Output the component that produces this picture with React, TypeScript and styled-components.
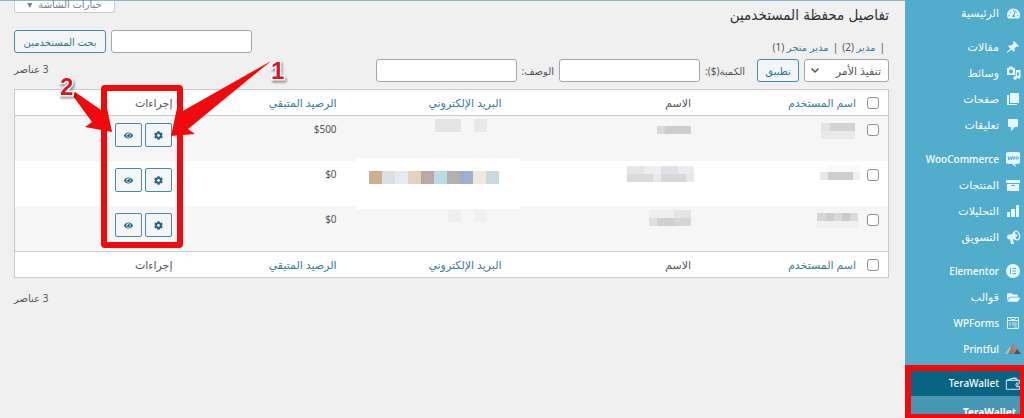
import React from "react";
import styled, { createGlobalStyle } from "styled-components";
import { FaTachometerAlt, FaFolderOpen, FaCog, FaEye } from "react-icons/fa";

const Global = createGlobalStyle`
  * { box-sizing: border-box; }
  body {
    margin: 0;
    background: #f0f0f0;
    color: #50575e;
    font-family: "Noto Sans", "DejaVu Sans", sans-serif;
    font-size: 11px;
    line-height: 16px;
  }
  button, input, select { font: inherit; color: inherit; }
  a { color: #3a7c98; text-decoration: none; }
`;

const Shell = styled.div`
  display: flex;
  height: 100vh;
  overflow: hidden;
`;

const Sidebar = styled.nav`
  flex: 0 0 119px;
  position: relative;
  background: #52accc;
`;

const MenuGroup = styled.ul`
  list-style: none;
  margin: 0 0 8px;
  padding: 0;
`;

const MenuLink = styled.a<{ $current?: boolean; $latin?: boolean }>`
  display: flex;
  align-items: center;
  gap: 6px;
  height: 26px;
  padding: 0 3px;
  color: #fff;
  background: ${(p) => (p.$current ? "#096484" : "transparent")};
  font-size: ${(p) => (p.$latin ? 10 : 11)}px;
  font-weight: ${(p) => (p.$latin ? 500 : 400)};
  white-space: nowrap;
`;

const MenuIcon = styled.span`
  flex: 0 0 16px;
  display: flex;
  justify-content: center;
  color: #e5f8ff;
`;

const SubmenuLink = styled.a`
  display: block;
  height: 40px;
  padding: 8px;
  background: #4796b3;
  color: #fff;
  font-size: 10px;
  font-weight: 700;
`;

const SidebarHighlight = styled.div`
  position: absolute;
  inset: auto 0 0;
  height: 53px;
  border: solid #f00a0e;
  border-width: 6px 4px 4px 6px;
`;

const Main = styled.main`
  flex: 1;
  min-width: 0;
  padding: 0 16px 0 14px;
  border-top: 1px solid #8fb4c2;
`;

const TopRow = styled.header`
  display: flex;
  justify-content: space-between;
  align-items: flex-start;
  height: 29px;
`;

const Title = styled.h1`
  margin: 0;
  padding-top: 2px;
  color: #2c3338;
  font-family: "DejaVu Sans Condensed", "DejaVu Sans", sans-serif;
  font-size: 15px;
  font-weight: 400;
  line-height: 24px;
`;

const ScreenOptions = styled.button`
  display: flex;
  align-items: flex-end;
  justify-content: center;
  gap: 6px;
  width: 101px;
  height: 12px;
  padding: 0;
  border: 1px solid #c9cbcd;
  border-top: 0;
  border-radius: 0 0 3px 3px;
  background: #fff;
  color: #787c82;
  font-size: 10px;
  line-height: 16px;
`;

const Tools = styled.div`
  display: grid;
  grid-template-columns: 1fr auto;
  row-gap: 6px;
  align-items: end;
  margin-bottom: 7px;
`;

const Filters = styled.div`
  display: flex;
  gap: 4px;
  padding: 0 4px;
  font-size: 10px;
  line-height: 12px;
`;

const Row = styled.div`
  display: flex;
  align-items: center;
  gap: 5px;
`;

const Fields = styled(Row)`
  margin-right: 7px;
`;

const Field = styled.input`
  width: 141px;
  height: 23px;
  border: 1px solid #a3a7ab;
  border-radius: 3px;
  background: #fff;
`;

const FieldLabel = styled.label`
  font-size: 10px;
`;

const SelectBox = styled.span`
  position: relative;
  display: flex;
`;

const Select = styled.select`
  appearance: none;
  width: 85px;
  height: 23px;
  padding: 0 7px;
  border: 1px solid #a3a7ab;
  border-radius: 3px;
  background: #fff;
`;

const Chevron = styled.svg`
  position: absolute;
  left: 6px;
  top: 8px;
  pointer-events: none;
`;

const Button = styled.button<{ $width: number }>`
  width: ${(p) => p.$width}px;
  height: 23px;
  padding: 0;
  border: 1px solid #4a8ba3;
  border-radius: 3px;
  background: #f3f5f6;
  color: #2f7691;
  font-size: 10px;
  white-space: nowrap;
`;

const Count = styled.p`
  margin: 0;
  font-size: 10px;
  line-height: 20px;
  text-align: left;
`;

const ToolsCount = styled(Count)`
  align-self: start;
`;

const TableWrap = styled.section`
  position: relative;
  margin-bottom: 10px;
`;

const Table = styled.table`
  width: 100%;
  table-layout: fixed;
  border-collapse: separate;
  border-spacing: 0;
  border: 1px solid #c8cacd;
  background: #fff;
`;

const HeadCell = styled.th<{ $foot?: boolean }>`
  height: 26px;
  padding: 0 8px;
  border: 0 solid #c8cacd;
  border-width: ${(p) => (p.$foot ? "1px 0 0" : "0 0 1px")};
  font-weight: 400;
  text-align: right;
`;

const BodyRow = styled.tr`
  &:nth-child(odd) { background: #f6f6f6; }
`;

const Cell = styled.td`
  height: 45px;
  padding: 5px 8px;
  font-size: 10px;
  vertical-align: top;
`;

const MosaicCell = styled.td`
  padding: 0;
  vertical-align: top;
`;

const Mosaic = styled.svg`
  display: block;
  overflow: visible;
`;

const CheckCell = styled(Cell)`
  padding: 8px 9px 0 0;
`;

const CheckHead = styled(HeadCell)`
  padding: 0 9px 0 0;
`;

const Checkbox = styled.input`
  appearance: none;
  display: block;
  width: 12px;
  height: 12px;
  margin: 0;
  border: 1px solid #8c8f94;
  border-radius: 3px;
  background: #fff;
`;

const Actions = styled.div`
  display: flex;
  gap: 3px;
  padding-top: 2px;
`;

const ActionButton = styled.button`
  display: grid;
  place-items: center;
  width: 27px;
  height: 24px;
  padding: 0;
  border: 1px solid #4a8ba3;
  border-radius: 2px;
  background: #f3f5f6;
  color: #23657e;
`;

const Annotations = styled.svg`
  position: absolute;
  left: 0;
  top: -40px;
  pointer-events: none;
`;

const Digits = styled.g`
  fill: #e3121a;
  stroke: #fff;
  stroke-width: 3px;
  paint-order: stroke;
  font-family: "Liberation Sans", sans-serif;
  font-size: 24px;
  font-weight: 700;
  filter: drop-shadow(1px 2px 1px rgba(0, 0, 0, 0.4));
`;

const icons = {
  dash: <FaTachometerAlt size={13} />,
  folder: <FaFolderOpen size={13} />,
  pin: (
    <svg width="14" height="14" viewBox="0 0 14 14" fill="currentColor">
      <path d="M8 1l5 5-1 1-1.500-.500L8.500 8.500Q9 10.500 8 12L5.500 9.500 1 13 .500 12.500 4.500 8.500 2 6Q3.500 5 5.500 5.500L7.500 3.500 7 2z" />
    </svg>
  ),
  media: (
    <svg width="15" height="14" viewBox="0 0 15 14" fill="currentColor">
      <path d="M1 2h1.500l1-1.500h3L7.500 2H9v7H1zM5 3.500a2 2 0 1 0 .010 0z" fillRule="evenodd" />
      <path d="M10 4h4.500v7a1.700 1.700 0 1 1-1.500-1.700V6.500h-2V12a1.800 1.800 0 1 1-1.500-1.800z" />
    </svg>
  ),
  elementor: (
    <svg width="14" height="14" viewBox="0 0 14 14">
      <circle cx="7" cy="7" r="7" fill="currentColor" />
      <path d="M4.500 4v6M6.500 4.500H10M6.500 7H10M6.500 9.500H10" stroke="#52accc" fill="none" />
    </svg>
  ),
  pages: (
    <svg width="14" height="14" viewBox="0 0 14 14" fill="currentColor">
      <path d="M4 1h9v10H4z" />
      <path d="M1 3h2v9h8v1H1z" />
    </svg>
  ),
  comment: (
    <svg width="14" height="14" viewBox="0 0 14 14" fill="currentColor">
      <path d="M3 1h8q1 0 1 1v6q0 1-1 1H9l-4 4V9H3Q2 9 2 8V2q0-1 1-1z" />
    </svg>
  ),
  woo: (
    <svg width="16" height="16" viewBox="0 0 16 16">
      <path d="M3 1h10q2 0 2 2v8q0 2-2 2h-3l1 3-4-3H3q-2 0-2-2V3q0-2 2-2z" fill="currentColor" />
      <path d="M3 5l1 4 1.500-3L6.500 9 7 5" fill="none" stroke="#52accc" />
      <circle cx="9" cy="7" r="1.200" fill="none" stroke="#52accc" />
      <circle cx="12.300" cy="7" r="1.200" fill="none" stroke="#52accc" />
    </svg>
  ),
  box: (
    <svg width="14" height="14" viewBox="0 0 14 14" fill="currentColor">
      <path d="M0 2h14v3H0z" />
      <path d="M1 6h12v7H1zM5 7v1h4V7z" fillRule="evenodd" />
    </svg>
  ),
  chart: (
    <svg width="14" height="14" viewBox="0 0 14 14" fill="currentColor">
      <path d="M1 8h3v5H1zM5 5h4v8H5zM10 1h3v12h-3z" />
    </svg>
  ),
  horn: (
    <svg width="15" height="15" viewBox="0 0 15 15" fill="currentColor">
      <path d="M9 1L6 4 2 5Q0 7 2 9l2 .500L5 14h3L7 9l3 1z" />
      <ellipse cx="10.500" cy="5.500" rx="3" ry="4.500" fill="none" stroke="currentColor" strokeWidth="1.300" transform="rotate(-15 10.500 5.500)" />
      <circle cx="10" cy="5.500" r="1.300" />
    </svg>
  ),
  forms: (
    <svg width="14" height="14" viewBox="0 0 14 14" fill="none" stroke="currentColor">
      <path d="M1.500 1.500h11v11h-11zM2 4.500h10" />
      <path d="M3 7h2M6 7h5M3 9h2M6 9h5M8 11h3M4 2l2 2 1-1 1 1 2-2" strokeOpacity=".8" />
    </svg>
  ),
  printful: (
    <svg width="16" height="12" viewBox="0 0 16 12">
      <path d="M0 11L4.500 4 9 11z" fill="#a9c5bd" />
      <path d="M3 11L8 1l5 10z" fill="#8b7f7c" />
      <path d="M8 1l8 10h-6L6.500 4z" fill="#c07a6e" />
      <path d="M9 11l3-5 4 5z" fill="#45575e" />
    </svg>
  ),
  wallet: (
    <svg width="16" height="15" viewBox="0 0 18 16" fill="none" stroke="currentColor">
      <path d="M16.500 7V4.500h-15v10h15V12M1.500 4.500L11 1.500l2 3M6 3l7-1 1 2.500M13 7.500h4.500v4H13q-1.500-2 0-4z" />
      <circle cx="14.500" cy="9.500" r=".5" />
    </svg>
  ),
};

type IconName = keyof typeof icons;

const menu: [string, IconName][][] = [
  [["الرئيسية", "dash"]],
  [
    ["مقالات", "pin"],
    ["وسائط", "media"],
    ["صفحات", "pages"],
    ["تعليقات", "comment"],
  ],
  [
    ["WooCommerce", "woo"],
    ["المنتجات", "box"],
    ["التحليلات", "chart"],
    ["التسويق", "horn"],
  ],
  [
    ["Elementor", "elementor"],
    ["قوالب", "folder"],
    ["WPForms", "forms"],
    ["Printful", "printful"],
  ],
  [["TeraWallet", "wallet"]],
];

type Block = [x: number, y: number, w: number, h: number, fill: string];

const emailColors = ["#cbb091", "#dde0e1", "#e3eaf2", "#e5d2bd", "#b9a8a4", "#b9dce2", "#b2b1b0", "#9eaecf", "#f0e8dc", "#c7d9e1"];

const users: { balance: string; user: Block[]; name: Block[]; email: Block[] }[] = [
  {
    balance: "$500",
    user: [[117, 7, 9, 8, "#e4e4e6"], [126, 7, 25, 8, "#d3d3d6"], [117, 15, 34, 8, "#e9e9eb"]],
    name: [[118, 10, 8, 8, "#d9d9da"], [126, 10, 26, 8, "#cdcdcf"]],
    email: [[85, 3, 26, 13, "#e4e4e4"], [124, 3, 13, 13, "#e9e8e8"]],
  },
  {
    balance: "$0",
    user: [[116, 11, 8, 8, "#e8e8ea"], [124, 11, 25, 8, "#cfcfd1"], [149, 11, 7, 8, "#eeeeef"], [124, 4, 32, 7, "#fafafa"]],
    name: [
      [88, 5, 17, 8, "#e6e6e9"], [105, 5, 17, 8, "#efeff1"], [122, 5, 17, 8, "#e1e1e5"], [139, 5, 16, 8, "#ececef"],
      [88, 13, 26, 8, "#d9d9de"], [114, 13, 8, 8, "#e9e9ec"], [122, 13, 25, 8, "#d7d7dc"], [147, 13, 8, 8, "#e7e7ea"],
    ],
    email: [
      [6, -3, 163, 51, "#ffffff"],
      ...emailColors.map((c, i): Block => [19 + i * 13, 10, 13, 13, c]),
    ],
  },
  {
    balance: "$0",
    user: [[113, 7, 9, 8, "#d6d6d9"], [122, 7, 8, 8, "#cdcdd0"], [130, 7, 8, 8, "#d9d9db"], [138, 7, 8, 8, "#cbcbce"], [146, 7, 8, 8, "#dadadd"], [113, 15, 41, 7, "#f0f0f1"]],
    name: [[110, 4, 25, 8, "#efeff0"], [135, 4, 17, 8, "#e5e5e6"], [110, 12, 8, 8, "#e0e0e2"], [118, 12, 17, 8, "#d0d0d3"], [135, 12, 17, 8, "#d6d6d8"]],
    email: [[98, 4, 13, 12, "#eeeeee"], [124, 4, 13, 12, "#f0f0f0"]],
  },
];

function Blocks({ items }: { items: Block[] }) {
  return (
    <MosaicCell>
      <Mosaic width="160" height="45" shapeRendering="crispEdges" aria-hidden>
        {items.map(([x, y, w, h, fill], i) => (
          <rect key={i} x={x} y={y} width={w} height={h} fill={fill} />
        ))}
      </Mosaic>
    </MosaicCell>
  );
}

function Headings({ foot = false }: { foot?: boolean }) {
  return (
    <tr>
      <CheckHead $foot={foot}><Checkbox type="checkbox" aria-label="تحديد الكل" /></CheckHead>
      <HeadCell $foot={foot}><a href="#user">اسم المستخدم</a></HeadCell>
      <HeadCell $foot={foot}>الاسم</HeadCell>
      <HeadCell $foot={foot}><a href="#email">البريد الإلكتروني</a></HeadCell>
      <HeadCell $foot={foot}><a href="#balance">الرصيد المتبقي</a></HeadCell>
      <HeadCell $foot={foot}>إجراءات</HeadCell>
    </tr>
  );
}

export default function App() {
  return (
    <Shell dir="rtl" lang="ar">
      <Global />
      <Sidebar>
        {menu.map((group, g) => (
          <MenuGroup key={g}>
            {group.map(([label, icon]) => (
              <li key={label}>
                <MenuLink href="#menu" $current={icon === "wallet"} $latin={/^[A-Z]/.test(label)}>
                  <MenuIcon>{icons[icon]}</MenuIcon>
                  {label}
                </MenuLink>
                {icon === "wallet" && <SubmenuLink href="#wallet">TeraWallet</SubmenuLink>}
              </li>
            ))}
          </MenuGroup>
        ))}
        <SidebarHighlight />
      </Sidebar>
      <Main>
        <TopRow>
          <Title>تفاصيل محفظة المستخدمين</Title>
          <ScreenOptions>خيارات الشاشة <span>▾</span></ScreenOptions>
        </TopRow>
        <Tools>
          <Filters>
            <span>|</span>
            <span><a href="#admin">مدير</a> (2)</span>
            <span>|</span>
            <span><a href="#shop">مدير متجر</a> (1)</span>
          </Filters>
          <Row>
            <Field type="search" aria-label="بحث المستخدمين" />
            <Button $width={92}>بحث المستخدمين</Button>
          </Row>
          <Row>
            <SelectBox>
              <Select aria-label="تنفيذ الأمر"><option>تنفيذ الأمر</option></Select>
              <Chevron width="10" height="7" viewBox="0 0 10 7" fill="none" stroke="#50575e" strokeWidth="1.500">
                <path d="M1.500 1.500L5 5l3.500-3.500" />
              </Chevron>
            </SelectBox>
            <Button $width={42}>تطبيق</Button>
            <Fields>
              <FieldLabel htmlFor="amount">الكمية($):</FieldLabel>
              <Field id="amount" />
              <FieldLabel htmlFor="description">الوصف:</FieldLabel>
              <Field id="description" />
            </Fields>
          </Row>
          <ToolsCount>3 عناصر</ToolsCount>
        </Tools>
        <TableWrap>
          <Table>
            <colgroup>
              <col width="24" />
              <col width="18.9%" />
              <col width="21.7%" />
              <col width="18.9%" />
              <col width="18.8%" />
              <col />
            </colgroup>
            <thead><Headings /></thead>
            <tbody>
              {users.map((u, i) => (
                <BodyRow key={i}>
                  <CheckCell><Checkbox type="checkbox" aria-label="تحديد" /></CheckCell>
                  <Blocks items={u.user} />
                  <Blocks items={u.name} />
                  <Blocks items={u.email} />
                  <Cell><bdi dir="ltr">{u.balance}</bdi></Cell>
                  <Cell>
                    <Actions>
                      <ActionButton aria-label="إعدادات"><FaCog size={9} /></ActionButton>
                      <ActionButton aria-label="عرض"><FaEye size={9} /></ActionButton>
                    </Actions>
                  </Cell>
                </BodyRow>
              ))}
            </tbody>
            <tfoot><Headings foot /></tfoot>
          </Table>
          <Annotations width="290" height="210" viewBox="14 49 290 210" direction="ltr">
            <g fill="#f00a0e">
              <rect x="104" y="88" width="76" height="157" rx="1" fill="none" stroke="#f00a0e" strokeWidth="6" />
              <path d="M271 61L181 112 177 108 171 136 195 134 188 129z" />
              <path d="M75 92L104 112 107 108 112 132 85 127 92 122 73 96z" />
            </g>
            <Digits>
              <text x="271" y="79">1</text>
              <text x="60" y="95">2</text>
            </Digits>
          </Annotations>
        </TableWrap>
        <Count>3 عناصر</Count>
      </Main>
    </Shell>
  );
}
